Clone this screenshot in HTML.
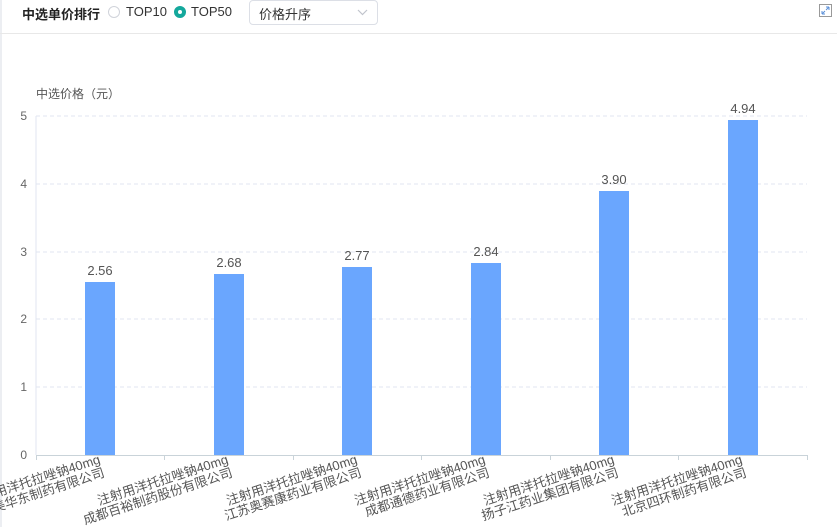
<!DOCTYPE html>
<html><head><meta charset="utf-8"><style>
body{margin:0;width:837px;height:527px;overflow:hidden;background:#fff;font-family:"Liberation Sans","Noto Sans CJK SC",sans-serif;position:relative}
.lb{position:absolute;left:0;top:0;width:2px;height:527px;background:#eceef2}
.hd{position:absolute;left:0;top:0;width:837px;height:33px;border-bottom:1px solid #e8e8e8}
.t{position:absolute;left:22px;top:4px;font-size:13px;font-weight:bold;color:#222}
.r{position:absolute;top:6px;width:12px;height:12px;border-radius:50%;border:1px solid #d0d3da;box-sizing:border-box}
.rl{position:absolute;top:4px;font-size:13px;color:#333}
.sel{position:absolute;left:249px;top:0;width:129px;height:25px;border:1px solid #dcdfe6;border-radius:4px;box-sizing:border-box;font-size:13px;color:#333;padding:3px 0 0 9px}
</style></head><body>
<div class="lb"></div>
<div class="hd">
<div class="t">中选单价排行</div>
<div class="r" style="left:108px"></div><div class="rl" style="left:126px">TOP10</div>
<div class="r" style="left:174px;border:4px solid #14a89c;background:#fff"></div><div class="rl" style="left:191px">TOP50</div>
<div class="sel">价格升序<svg style="position:absolute;right:9px;top:8px" width="11" height="7"><path d="M1 1l4.5 4.5L10 1" fill="none" stroke="#c0c4cc" stroke-width="1.2"/></svg></div>
<svg style="position:absolute;left:819px;top:4px" width="13" height="13"><rect x="0.5" y="0.5" width="12" height="12" fill="none" stroke="#999"/><path d="M3 10l3-3M3 10h3M3 10V7M10 3L7 6M10 3H7M10 3v3" stroke="#5a8fd8" fill="none"/></svg>
</div>
<svg style="position:absolute;left:0;top:0" width="837" height="527" font-family="Liberation Sans, Noto Sans CJK SC, sans-serif">
<text x="36" y="98" font-size="12" fill="#555">中选价格（元）</text>
<g stroke="#e0e6f1" stroke-dasharray="4,3">
<line x1="36" x2="807" y1="116" y2="116"/><line x1="36" x2="807" y1="184" y2="184"/><line x1="36" x2="807" y1="252" y2="252"/><line x1="36" x2="807" y1="319" y2="319"/><line x1="36" x2="807" y1="387" y2="387"/>
</g>
<line x1="36" x2="36" y1="116" y2="455" stroke="#e0e6f1"/>
<line x1="36" x2="807" y1="455.5" y2="455.5" stroke="#c9d3d9"/>
<g stroke="#c9d3d9"><line x1="36.5" x2="36.5" y1="455" y2="460"/><line x1="164.5" x2="164.5" y1="455" y2="460"/><line x1="293.5" x2="293.5" y1="455" y2="460"/><line x1="421.5" x2="421.5" y1="455" y2="460"/><line x1="550.5" x2="550.5" y1="455" y2="460"/><line x1="678.5" x2="678.5" y1="455" y2="460"/><line x1="807.5" x2="807.5" y1="455" y2="460"/></g>
<g font-size="12" fill="#666" text-anchor="end">
<text x="27" y="120">5</text><text x="27" y="188">4</text><text x="27" y="256">3</text><text x="27" y="323">2</text><text x="27" y="391">1</text><text x="27" y="459">0</text>
</g>
<g fill="#6aa6fe">
<rect x="85" y="282" width="30" height="173"/><rect x="214" y="274" width="30" height="181"/><rect x="342" y="267" width="30" height="188"/><rect x="471" y="263" width="30" height="192"/><rect x="599" y="191" width="30" height="264"/><rect x="728" y="120" width="30" height="335"/>
</g>
<g font-size="13" fill="#555" text-anchor="middle">
<text x="100" y="275">2.56</text><text x="229" y="267">2.68</text><text x="357" y="260">2.77</text><text x="486" y="256">2.84</text><text x="614" y="184">3.90</text><text x="743" y="113">4.94</text>
</g>
<g font-size="13" fill="#555" text-anchor="end">
<g transform="translate(101,463) rotate(-18)"><text>注射用洋托拉唑钠40mg</text><text y="14">美华东制药有限公司</text></g>
<g transform="translate(229,463) rotate(-18)"><text>注射用洋托拉唑钠40mg</text><text y="14">成都百裕制药股份有限公司</text></g>
<g transform="translate(358,463) rotate(-18)"><text>注射用洋托拉唑钠40mg</text><text y="14">江苏奥赛康药业有限公司</text></g>
<g transform="translate(486,463) rotate(-18)"><text>注射用洋托拉唑钠40mg</text><text y="14">成都通德药业有限公司</text></g>
<g transform="translate(615,463) rotate(-18)"><text>注射用洋托拉唑钠40mg</text><text y="14">扬子江药业集团有限公司</text></g>
<g transform="translate(743,463) rotate(-18)"><text>注射用洋托拉唑钠40mg</text><text y="14">北京四环制药有限公司</text></g>
</g>
</svg>
</body></html>
